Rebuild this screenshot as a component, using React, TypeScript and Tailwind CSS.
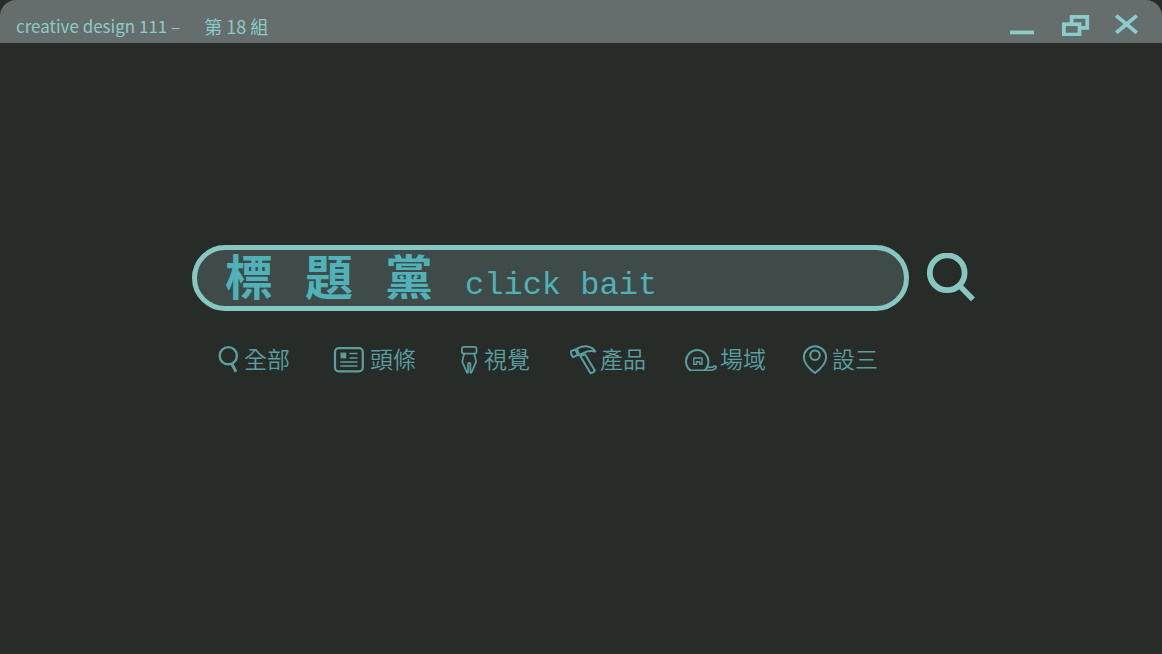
import type { ReactNode } from "react";

type Category = { label: string; icon: ReactNode };

function Icon({ width, className, children }: { width: number; className: string; children: ReactNode }) {
  return (
    <svg
      viewBox={`0 0 ${width} 32`}
      className={`h-8 shrink-0 ${className}`}
      fill="none"
      stroke="currentColor"
      strokeWidth="2"
      strokeLinecap="round"
      strokeLinejoin="round"
      aria-hidden="true"
    >
      {children}
    </svg>
  );
}

const categories: Category[] = [
  {
    label: "全部",
    icon: (
      <Icon width={26} className="w-[26px]">
        <circle cx="10.3" cy="11.7" r="8.6" strokeWidth="2.4" />
        <path d="M14 20.2 18 27.8" strokeWidth="3" strokeLinecap="butt" />
      </Icon>
    ),
  },
  {
    label: "頭條",
    icon: (
      <Icon width={44} className="w-11">
        <rect x="9" y="4.2" width="27.8" height="23.2" rx="3.8" strokeWidth="2.2" />
        <rect x="14.5" y="8.6" width="5.8" height="5.8" fill="currentColor" stroke="none" />
        <path d="M23.5 9.5h8M23.5 14h8M14.2 18h17.3M14.2 22h17.3" strokeWidth="1.5" strokeLinecap="butt" />
      </Icon>
    ),
  },
  {
    label: "視覺",
    icon: (
      <Icon width={32} className="w-8">
        <rect x="9.9" y="2.8" width="14.6" height="6.8" rx="2" strokeWidth="1.7" />
        <path
          d="M12.2 9.8 10.2 17.6 15 28.6H16V20a1.2 1.2 0 0 1 2.4 0v8.6h1L24.2 17.6 22.2 9.8"
          strokeWidth="1.7"
        />
      </Icon>
    ),
  },
  {
    label: "產品",
    icon: (
      <Icon width={34} className="w-[34px]">
        <path d="M5 7.2 9.3 5.3 11.8 10.8 7.3 13.2Q4.6 11.2 5 7.2Z" />
        <path d="M11 4.6Q16.5 1.8 21.5 2.4 26.8 3.2 29.3 7.4 24.5 6.4 20.6 7.6L13 11.2Z" />
        <path d="M14.4 12.2 19 10.2 28.8 26.4Q28.4 28.6 24.6 29.2Z" />
      </Icon>
    ),
  },
  {
    label: "場域",
    icon: (
      <Icon width={38} className="w-[38px]">
        <path d="M8.2 26.2Q4 23 4 17.3A11.2 11.2 0 0 1 26.4 17.3Q26.4 22.8 23 26" />
        <path d="M8.2 26.2H29.5Q34.6 25.2 34.2 22.6 32.4 21.4 30.5 23.2L24.6 23.4" strokeWidth="1.6" />
        <path d="M11.8 20.2V14H20V20.2H17.8V17.8H14.6V20.2Z" strokeWidth="1.4" />
      </Icon>
    ),
  },
  {
    label: "設三",
    icon: (
      <Icon width={30} className="w-[30px]">
        <path d="M13 29Q1.9 20.6 1.9 13.4A11.1 11.1 0 0 1 24.1 13.4Q24.1 20.6 13 29Z" />
        <circle cx="13" cy="11.2" r="4.8" />
      </Icon>
    ),
  },
];

function TitleBar() {
  return (
    <header className="flex h-[43px] items-center justify-between rounded-t-2xl bg-[#666e6d] pr-5 pl-4 text-[#8accc9]">
      <h1 className="flex gap-6 pt-2 leading-6 whitespace-pre">
        <span className="text-[17px]">creative design 111 –</span>
        <span className="text-[18px]">第 18 組</span>
      </h1>
      <div className="flex gap-6">
        <button type="button" aria-label="最小化">
          <svg viewBox="0 0 28 28" className="size-7" aria-hidden="true">
            <path d="M0 22.5h24v3.8H0z" fill="currentColor" />
          </svg>
        </button>
        <button type="button" aria-label="還原視窗">
          <svg viewBox="0 0 28 28" className="size-7" fill="none" stroke="currentColor" strokeWidth="3.8" aria-hidden="true">
            <path d="M9.6 15V8.8H25.2V19.8H18.6" />
            <rect x="1.9" y="16.2" width="15.6" height="10.4" />
          </svg>
        </button>
        <button type="button" aria-label="關閉">
          <svg viewBox="0 0 28 28" className="size-7" fill="none" stroke="currentColor" strokeWidth="3.8" aria-hidden="true">
            <path d="M2.2 7.6 22.8 24.8M22.8 7.6 2.2 24.8" />
          </svg>
        </button>
      </div>
    </header>
  );
}

function SearchForm() {
  return (
    <form className="flex items-center gap-[18px]" onSubmit={(event) => event.preventDefault()}>
      <div className="flex h-[66px] min-w-0 flex-1 items-center gap-8 rounded-full border-[5px] border-[#86c7c1] bg-[#3e4b48] pl-7 text-[#50b2b8]">
        <label htmlFor="query" className="flex shrink-0 gap-8 pb-2 text-5xl leading-none font-bold">
          <span>標</span>
          <span>題</span>
          <span>黨</span>
        </label>
        <input
          id="query"
          type="text"
          defaultValue="click bait"
          className="mt-4 min-w-0 flex-1 bg-transparent font-['Liberation_Mono',monospace] text-[32px] leading-10 outline-none"
        />
      </div>
      <button type="submit" aria-label="搜尋" className="shrink-0 text-[#86c7c1]">
        <svg viewBox="0 0 48 50" className="h-[50px] w-12" fill="none" stroke="currentColor" aria-hidden="true">
          <circle cx="20.2" cy="19.8" r="17.4" strokeWidth="5.8" />
          <path d="M32.3 32.5 46 46.4" strokeWidth="5.6" />
        </svg>
      </button>
    </form>
  );
}

export default function App() {
  return (
    <div className="flex min-h-screen flex-col bg-[#282c28] font-['Noto_Sans_CJK_TC',sans-serif]">
      <TitleBar />
      <main className="flex-1 pt-[202px] pr-[187px] pl-48">
        <SearchForm />
        <nav aria-label="分類" className="mt-[33px] pl-[26px]">
          <ul className="flex gap-9 text-[#5a9fa0]">
            {categories.map(({ label, icon }) => (
              <li key={label}>
                <a href="#" className="flex items-start text-[23px] leading-7 font-[350] whitespace-nowrap">
                  {icon}
                  {label}
                </a>
              </li>
            ))}
          </ul>
        </nav>
      </main>
    </div>
  );
}
